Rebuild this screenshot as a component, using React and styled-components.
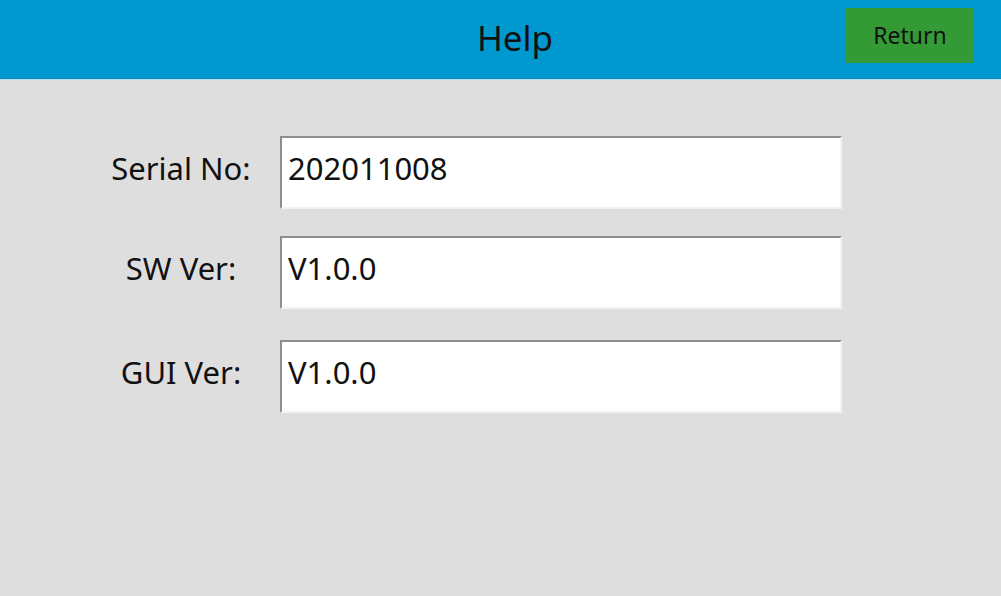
import React from 'react'
import styled, { createGlobalStyle } from 'styled-components'

const Global = createGlobalStyle`
  html, body {
    margin: 0;
    padding: 0;
    background: #dedede;
  }
  body {
    font-family: "Noto Sans", "Open Sans", sans-serif;
  }
`

const Screen = styled.div`
  width: 1001px;
  height: 596px;
  display: flex;
  flex-direction: column;
  background: #dedede;
  overflow: hidden;
`

const Header = styled.div`
  height: 78px;
  background: #0099cf;
  border-bottom: 1px solid #0a88b8;
  box-shadow: 0 1px 0 #b9e0f0;
  margin-bottom: 1px;
  display: grid;
  grid-template-columns: 1fr auto 1fr;
  align-items: center;
`

const Title = styled.h1`
  grid-column: 2;
  margin: 0 0 4px 0;
  font-size: 35px;
  font-weight: 400;
  color: #111;
  padding-left: 29px;
`

const ReturnButton = styled.button`
  grid-column: 3;
  justify-self: end;
  margin-right: 28px;
  margin-bottom: 8px;
  width: 128px;
  height: 55px;
  border: none;
  background: #339a35;
  color: #111;
  font-family: inherit;
  font-size: 23px;
  padding: 0 0 0 2px;
`

const Form = styled.div`
  display: flex;
  flex-direction: column;
  padding: 56px 0 0 100px;
`

const Row = styled.div`
  display: flex;
  align-items: flex-start;
  margin-top: ${p => p.$top}px;
`

const Label = styled.div`
  width: 162px;
  margin-right: 18px;
  padding-top: 11px;
  text-align: center;
  font-size: 31px;
  color: #111;
`

const Field = styled.div`
  width: 552px;
  height: 60px;
  background: #fff;
  border-top: 2px solid #8e8e8e;
  border-left: 2px solid #8e8e8e;
  border-right: 2px solid #f2f2f2;
  border-bottom: 2px solid #f2f2f2;
  box-sizing: content-box;
  padding-left: 6px;
  padding-top: 9px;
  font-size: 31px;
  color: #111;
`

const rows = [
  { label: 'Serial No:', value: '202011008', top: 0 },
  { label: 'SW Ver:', value: 'V1.0.0', top: 27 },
  { label: 'GUI Ver:', value: 'V1.0.0', top: 31 },
]

export default function App() {
  return (
    <Screen>
      <Global />
      <Header>
        <Title>Help</Title>
        <ReturnButton>Return</ReturnButton>
      </Header>
      <Form>
        {rows.map(r => (
          <Row key={r.label} $top={r.top}>
            <Label>{r.label}</Label>
            <Field>{r.value}</Field>
          </Row>
        ))}
      </Form>
    </Screen>
  )
}
